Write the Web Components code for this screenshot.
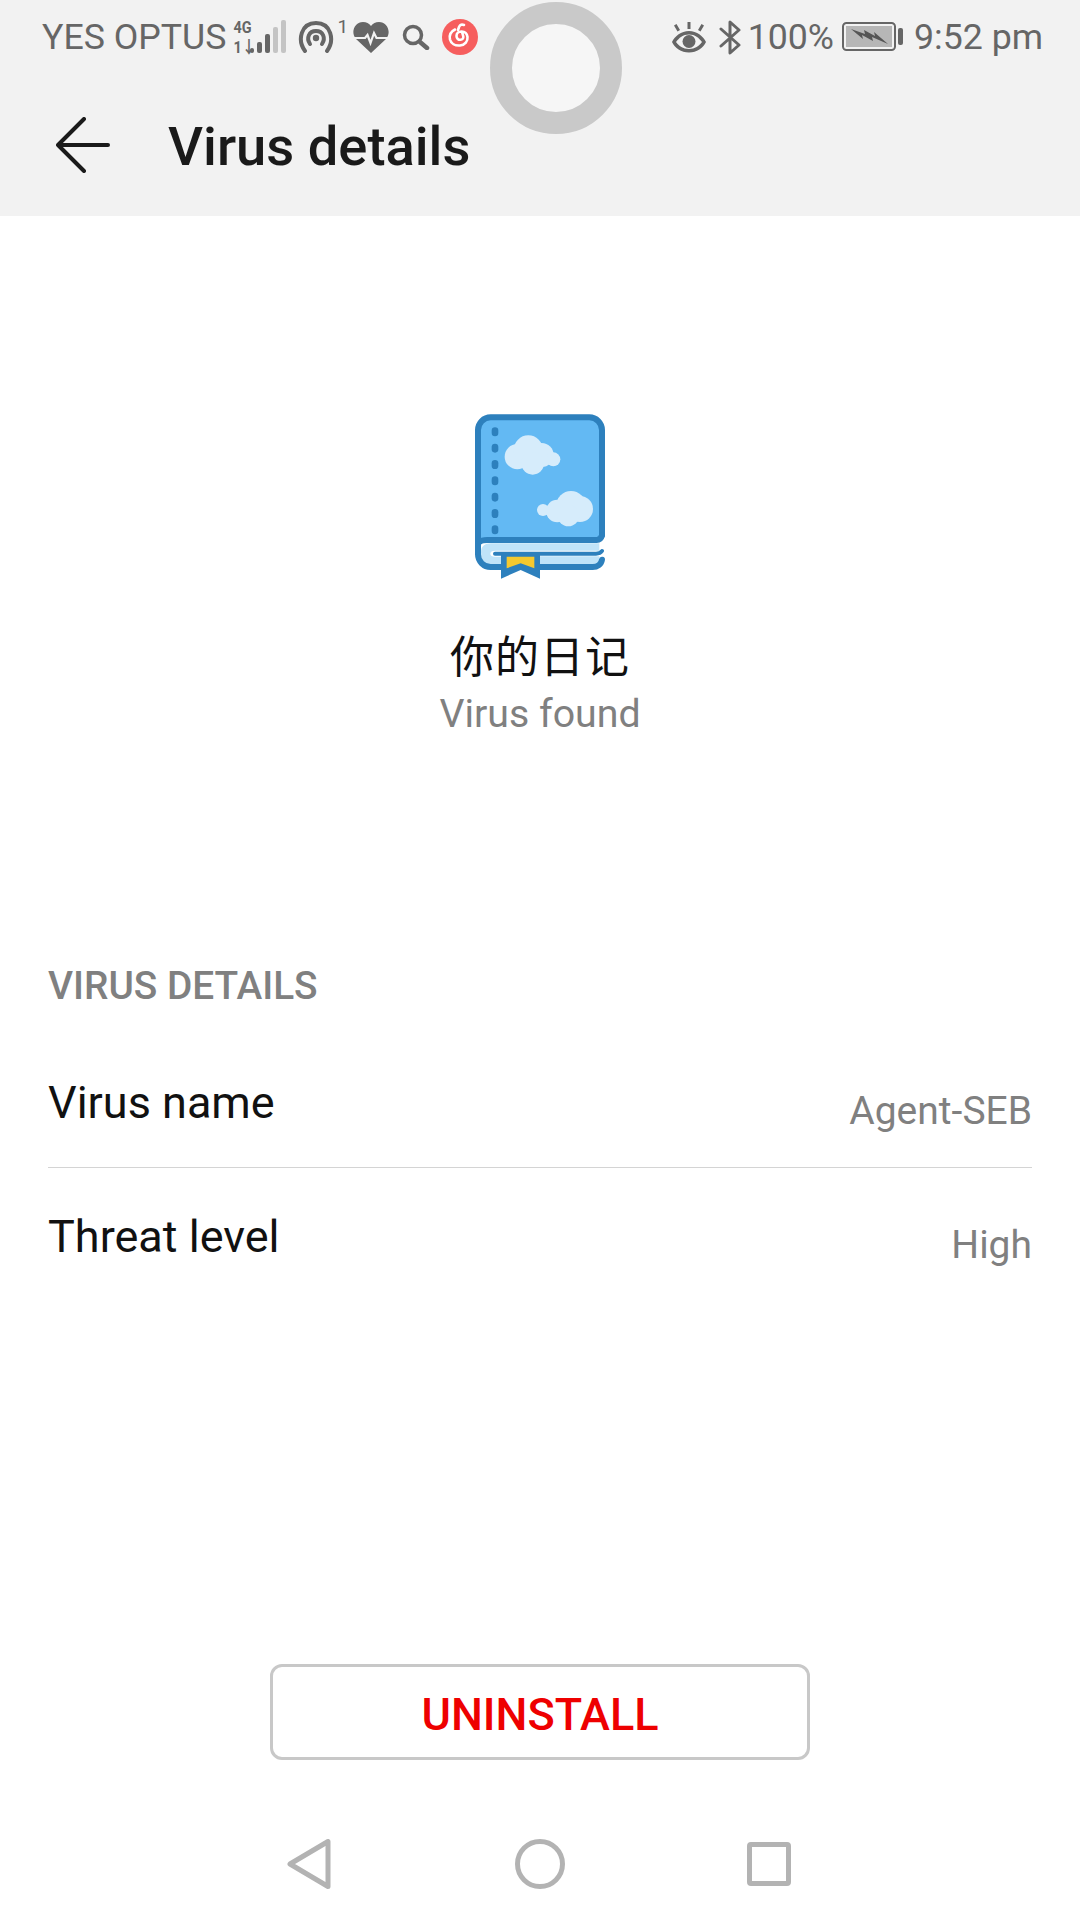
<!DOCTYPE html>
<html>
<head>
<meta charset="utf-8">
<title>Virus details</title>
<style>
    html, body { margin: 0; background: #fff; }
    body { width: 1080px; height: 1920px; overflow: hidden; font-family: Roboto, "Noto Sans CJK SC", sans-serif; }
</style>
</head>
<body>
<virus-screen>
    <app-header slot="header" title="Virus details"></app-header>
    <app-summary name="你的日记" status="Virus found"></app-summary>
    <section-label>VIRUS DETAILS</section-label>
    <detail-row label="Virus name" value="Agent-SEB" divider></detail-row>
    <detail-row label="Threat level" value="High"></detail-row>
    <uninstall-button slot="action">UNINSTALL</uninstall-button>
    <nav-keys slot="nav"></nav-keys>
</virus-screen>

<script>
class VirusScreen extends HTMLElement {
    constructor() {
        super();
        this.attachShadow({ mode: 'open' });
    }

    connectedCallback() {
        this.shadowRoot.innerHTML = `<style>
            :host { display: flex; flex-direction: column; width: 1080px; height: 1920px; position: relative; }
            main { flex: 1; display: flex; flex-direction: column; }
        </style>
        <slot name="header"></slot>
        <main><slot></slot></main>
        <slot name="action"></slot>
        <slot name="nav"></slot>`;
    }
}

class StatusBar extends HTMLElement {
    constructor() {
        super();
        this.attachShadow({ mode: 'open' });
    }

    connectedCallback() {
        const c = '#666';
        this.shadowRoot.innerHTML = `<style>
            :host { display: flex; justify-content: space-between; align-items: center; height: 74px; padding: 0 37px 0 42px; font-size: 35.700px; color: ${c}; }
            .side { display: flex; align-items: center; height: 74px; }
            svg { display: block; flex: none; }
            .net { display: flex; flex-direction: column; height: 40px; width: 20px; margin-left: 6px; font-size: 17px; font-weight: 700; line-height: 20px; text-align: center; }
            .net span { display: block; transform: scaleX(.85); white-space: nowrap; }
            .sup { font-size: 19px; line-height: 17px; align-self: flex-start; margin: 18px 0 0 3px; width: 9px; }
        </style>
        <div class="side">
            <span>YES OPTUS</span>
            <div class="net"><span>4G</span><span>1↓</span></div>
            <svg width="38" height="36" viewBox="0 0 38 36" style="margin-left:-3px">
                <rect x="1" y="29" width="4" height="5" rx="2" fill="${c}"/>
                <rect x="8" y="23" width="5" height="11" rx="2" fill="${c}"/>
                <rect x="16" y="15" width="5" height="19" rx="2" fill="${c}"/>
                <rect x="24" y="8" width="5" height="26" rx="2" fill="#c4c4c4"/>
                <rect x="32" y="1" width="5" height="33" rx="2" fill="#c4c4c4"/>
            </svg>
            <svg width="36" height="32" viewBox="0 0 36 32" style="margin-left:11px" fill="none" stroke="${c}" stroke-width="4" stroke-linecap="round">
                <path d="M7 30C-1 19 3 2 18 2s19 17 11 28"/>
                <path d="M12 23c-4-6-1-13 6-13s10 7 6 13"/>
                <circle cx="18" cy="17" r="3.200" fill="${c}" stroke="none"/>
            </svg>
            <span class="sup">1</span>
            <svg width="36" height="32" viewBox="0 0 36 32" style="margin-left:7px">
                <path d="M18 32 3 18C-3 11 2 1 10 1c3.500 0 6 1.500 8 4 2-2.500 4.500-4 8-4 8 0 13 10 7 17Z" fill="${c}"/>
                <path d="M1 17h11l2.500-3 3 8 3.500-10 2.500 5H35" fill="none" stroke="#f2f2f2" stroke-width="2.200"/>
            </svg>
            <svg width="28" height="26" viewBox="0 0 28 26" style="margin-left:13px" fill="none" stroke="${c}" stroke-width="3.500" stroke-linecap="round">
                <circle cx="11" cy="11" r="8.500"/>
                <path d="M18 18l7 6" stroke-width="4.500"/>
            </svg>
            <svg width="36" height="36" viewBox="0 0 36 36" style="margin-left:12px">
                <circle cx="18" cy="18" r="18" fill="#f65e5e"/>
                <g fill="none" stroke="#fff" stroke-width="2.600" stroke-linecap="round">
                    <path d="M22 6c-2-1-4 0-5 2l-1 3"/>
                    <path d="M13 10.500c-4 2-6 5.500-5 10 1 4 5 6.500 10 6 5-.5 8-4.500 7.500-8.500-.5-3.500-3-5.500-6-5.500-3 0-5 2-5 4.500 0 2.500 2 4 4 3.800 2-.2 3-1.600 2.800-3.300L20 13"/>
                </g>
            </svg>
        </div>
        <div class="side">
            <svg width="36" height="31" viewBox="0 0 36 31" fill="${c}">
                <path d="M18 9C10 9 4 14 1 20c3 6 9 10.500 17 10.500S32 26 35 20C32 14 26 9 18 9Zm0 3.500c6 0 10 3.500 13 7.500-3 4-7 7-13 7S8 24 5 20c3-4 7-7.500 13-7.500Z"/>
                <circle cx="18" cy="19.500" r="6.500"/>
                <path d="M16.500 0h3v7h-3zM3 3.500 5.500 2l3.500 6-2.500 1.500zM33 3.500 30.500 2 27 8l2.500 1.500z"/>
            </svg>
            <svg width="22" height="35" viewBox="0 0 22 35" style="margin-left:12px" fill="none" stroke="${c}" stroke-width="3" stroke-linejoin="round" stroke-linecap="round">
                <path d="M2 9l18 16-9 8V2l9 8L2 26"/>
            </svg>
            <span style="margin-left:7px">100%</span>
            <svg width="61" height="30" viewBox="0 0 61 30" style="margin-left:8px">
                <rect x="1" y="1" width="52" height="27" rx="3.500" fill="none" stroke="${c}" stroke-width="2"/>
                <rect x="4" y="4" width="46" height="21" fill="#b6b6b6"/>
                <rect x="56" y="6" width="5" height="17" rx="2" fill="${c}"/>
                <path d="M9 7l14 5-1-4 11 6-1-4 14 12-16-7 1 4-11-6 1 4Z" fill="#555"/>
            </svg>
            <span style="margin-left:11px">9:52 pm</span>
        </div>`;
    }
}

class AppHeader extends HTMLElement {
    constructor() {
        super();
        this.attachShadow({ mode: 'open' });
    }

    connectedCallback() {
        this.shadowRoot.innerHTML = `<style>
            :host { display: block; height: 216px; background: #f2f2f2; position: relative; }
            .bar { display: flex; align-items: center; height: 142px; }
            svg.back { display: block; margin-left: 56px; flex: none; }
            h1 { margin: 0 0 0 58px; font-size: 54.300px; font-weight: 500; line-height: 60px; color: #1a1a1a; position: relative; top: 2px; }
            .touch { position: absolute; left: 490px; top: 2px; width: 132px; height: 132px; box-sizing: border-box; border: 22px solid #c9c9c9; border-radius: 50%; background: #f6f6f6; }
        </style>
        <status-bar></status-bar>
        <div class="bar">
            <svg class="back" width="54" height="56" viewBox="0 0 54 56" fill="none" stroke="#1a1a1a" stroke-width="4" stroke-linecap="round" stroke-linejoin="round">
                <path d="M28 2 2 28l26 26M2 28h50"/>
            </svg>
            <h1>${this.getAttribute('title')}</h1>
        </div>
        <div class="touch"></div>`;
    }
}

class AppSummary extends HTMLElement {
    constructor() {
        super();
        this.attachShadow({ mode: 'open' });
    }

    connectedCallback() {
        const dots = [97, 146, 195, 244, 293, 342, 391]
            .map(y => `<rect x="155" y="${y}" width="20" height="27" rx="10" fill="#2d80bd"/>`).join('');
        this.shadowRoot.innerHTML = `<style>
            :host { display: flex; flex-direction: column; align-items: center; padding-top: 179px; }
            svg { display: block; }
            .name { margin-top: 29px; font: 44px/60px "Noto Sans CJK SC", sans-serif; color: #111; letter-spacing: 1px; }
            .status { margin-top: 5px; font-size: 39.300px; line-height: 50px; color: #808080; }
        </style>
        <svg width="200" height="200" viewBox="0 0 600 600">
            <path d="M114 436V105a38 38 0 0 1 38-38h296a38 38 0 0 1 38 38v318c-2 8-8 13-16 13Z" fill="#63b9f3"/>
            <path d="M123 472c0-18 12-27 30-27h325v22H165c-9 0-14 3-14 9s5 9 14 9h20v31h-30c-18 0-32-16-32-44Z" fill="#bfe3f9"/>
            <path d="M298 484h180v23H298Z" fill="#bfe3f9"/>
            <g fill="none" stroke="#2d80bd" stroke-linecap="round">
                <path d="M186 516h-34a38 38 0 0 1-38-38V105a38 38 0 0 1 38-38h296a38 38 0 0 1 38 38v316" stroke-width="18"/>
                <path d="M298 516h160c14 0 26-8 28-22" stroke-width="18"/>
                <path d="M120 440c6-6 14-5 28-5h322c8 0 14-6 16-14" stroke-width="18"/>
                <path d="M165 476h303c6 0 14-2 18-8" stroke-width="12"/>
            </g>
            ${dots}
            <path d="M183 478h117v73l-58-26-59 26Z" fill="#2d80bd"/>
            <path d="M200 485h83v35l-41-15-42 15Z" fill="#f5c92f"/>
            <g fill="#d6ecfb">
                <circle cx="232" cy="185" r="38"/><circle cx="265" cy="165" r="44"/><circle cx="305" cy="180" r="36"/>
                <circle cx="278" cy="205" r="34"/><circle cx="340" cy="193" r="21"/>
                <circle cx="420" cy="342" r="39"/><circle cx="393" cy="332" r="44"/><circle cx="352" cy="348" r="34"/>
                <circle cx="385" cy="362" r="32"/><circle cx="309" cy="345" r="18"/>
            </g>
        </svg>
        <div class="name">${this.getAttribute('name')}</div>
        <div class="status">${this.getAttribute('status')}</div>`;
    }
}

class SectionLabel extends HTMLElement {
    constructor() {
        super();
        this.attachShadow({ mode: 'open' });
    }

    connectedCallback() {
        this.shadowRoot.innerHTML = `<style>
            :host { display: block; margin: 222px 48px 24px; font-size: 38.800px; font-weight: 500; line-height: 50px; color: #808080; }
        </style><slot></slot>`;
    }
}

class DetailRow extends HTMLElement {
    constructor() {
        super();
        this.attachShadow({ mode: 'open' });
    }

    connectedCallback() {
        this.shadowRoot.innerHTML = `<style>
            :host { display: flex; justify-content: space-between; align-items: center; box-sizing: border-box; height: 133px; padding-top: 6px; margin: 0 48px; border-bottom: 1px solid transparent; }
            :host([divider]) { padding-top: 4px; border-bottom-color: #d4d4d4; }
            .label { font-size: 45px; line-height: 56px; color: #111; }
            .value { font-size: 39px; line-height: 50px; color: #808080; margin-top: 16px; }
        </style>
        <span class="label">${this.getAttribute('label')}</span>
        <span class="value">${this.getAttribute('value')}</span>`;
    }
}

class UninstallButton extends HTMLElement {
    constructor() {
        super();
        this.attachShadow({ mode: 'open' });
    }

    connectedCallback() {
        this.shadowRoot.innerHTML = `<style>
            :host { display: flex; align-items: center; justify-content: center; box-sizing: border-box; width: 540px; height: 96px; margin: 0 auto 48px; padding-top: 4px; border: 3px solid #c8c8c8; border-radius: 12px; font-size: 45px; font-weight: 500; color: #ee0000; }
        </style><slot></slot>`;
    }
}

class NavKeys extends HTMLElement {
    constructor() {
        super();
        this.attachShadow({ mode: 'open' });
    }

    connectedCallback() {
        this.shadowRoot.innerHTML = `<style>
            :host { display: flex; justify-content: center; align-items: center; height: 112px; padding-right: 2px; }
            svg { display: block; fill: none; stroke: #b3b3b3; stroke-width: 5; stroke-linejoin: round; }
        </style>
        <svg width="44" height="50" viewBox="0 0 44 50" style="margin-right:184px"><path d="M3 25 41 2.500v45Z"/></svg>
        <svg width="50" height="50" viewBox="0 0 50 50" style="margin-right:182px"><circle cx="25" cy="25" r="22.500"/></svg>
        <svg width="44" height="44" viewBox="0 0 44 44"><rect x="2.500" y="2.500" width="39" height="39" rx="1.500"/></svg>`;
    }
}

customElements.define('status-bar', StatusBar);
customElements.define('app-header', AppHeader);
customElements.define('app-summary', AppSummary);
customElements.define('section-label', SectionLabel);
customElements.define('detail-row', DetailRow);
customElements.define('uninstall-button', UninstallButton);
customElements.define('nav-keys', NavKeys);
customElements.define('virus-screen', VirusScreen);
</script>
</body>
</html>
